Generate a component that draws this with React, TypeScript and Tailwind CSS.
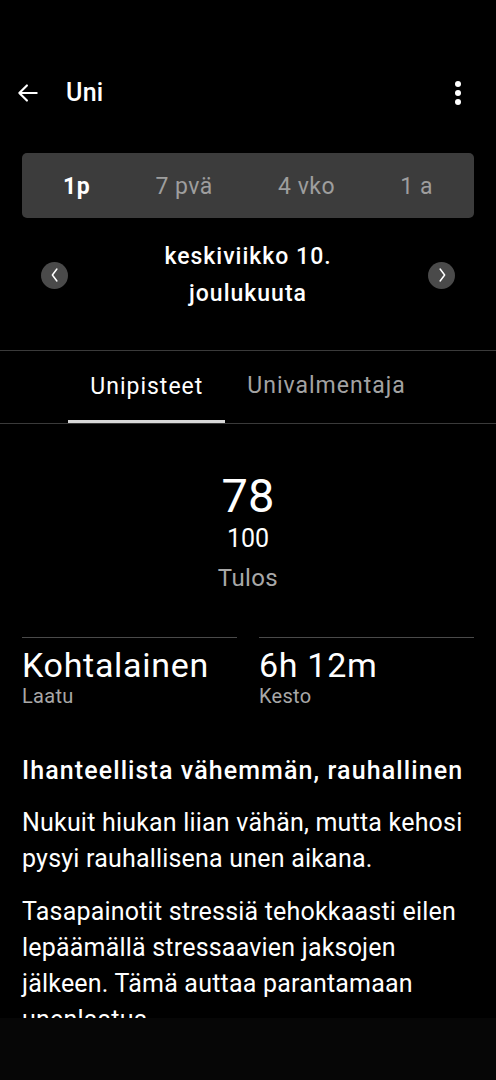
import React from "react"

const tabs = ["1p", "7 pvä", "4 vko", "1 a"]

const Chevron = ({ dir }: { dir: "left" | "right" }) => (
  <div className="w-[27px] h-[27px] rounded-full bg-[#4a4a4a] flex items-center justify-center">
    <svg width="18" height="18" viewBox="0 0 24 24" fill="none" stroke="#ffffff" strokeWidth={2} strokeLinecap="round" strokeLinejoin="round">
      {dir === "left" ? <path d="M14.5 4l-6 8 6 8" /> : <path d="M9.5 4l6 8-6 8" />}
    </svg>
  </div>
)

export default function App() {
  return (
    <div className="w-[496px] h-[1080px] bg-black text-[#f2f2f2] flex flex-col overflow-hidden" style={{ fontFamily: "Roboto, 'Noto Sans', sans-serif" }}>
      <div className="h-[1018px] overflow-hidden">
        {/* Header */}
        <div className="mt-[65px] h-[56px] flex items-center pl-[15px] pr-[35px]">
          <svg width="26" height="26" viewBox="0 0 24 24" fill="none" stroke="#ffffff" strokeWidth={2} strokeLinecap="round" strokeLinejoin="round">
            <path d="M20 12H4M11 5l-7 7 7 7" />
          </svg>
          <span className="ml-[25px] text-[25px] tracking-[0.3px] font-medium text-white">Uni</span>
          <div className="ml-auto flex flex-col items-center gap-[3px]">
            <span className="w-[6px] h-[6px] rounded-full bg-white" />
            <span className="w-[6px] h-[6px] rounded-full bg-white" />
            <span className="w-[6px] h-[6px] rounded-full bg-white" />
          </div>
        </div>

        {/* Segmented control */}
        <div className="mt-[32px] mx-[22px] h-[65px] rounded-[5px] bg-[#3c3c3c] flex items-center justify-between px-[41px] pt-[3px] text-[23px] tracking-[0.5px]">
          {tabs.map((t, i) => (
            <span key={t} className={i === 0 ? "font-bold text-white" : "text-[#9e9e9e]"}>{t}</span>
          ))}
        </div>

        {/* Date */}
        <div className="mt-[20px] flex items-center justify-between px-[41px]">
          <Chevron dir="left" />
          <div className="text-center text-[23px] tracking-[1px] font-medium leading-[37px] text-white">
            keskiviikko 10.<br />joulukuuta
          </div>
          <Chevron dir="right" />
        </div>

        {/* Tabs */}
        <div className="mt-[38px] border-t border-b border-[#3a3a3a] flex justify-center">
          <div className="px-[22px] h-[72px] flex items-center text-[23px] tracking-[1px] text-white border-b-[3px] border-[#d8d8d8] pt-[3px]">Unipisteet</div>
          <div className="px-[22px] h-[72px] flex items-center text-[23px] tracking-[1px] text-[#a3a3a3] pb-[1px]">Univalmentaja</div>
        </div>

        {/* Score */}
        <div className="mt-[45px] flex flex-col items-center">
          <div className="text-[47px] leading-[54px] text-white">78</div>
          <div className="text-[25px] leading-[30px] text-white mt-[1px]">100</div>
          <div className="mt-[9px] text-[24px] tracking-[0.4px] leading-[30px] text-[#a8a8a8]">Tulos</div>
        </div>

        {/* Stats */}
        <div className="mt-[44px] mx-[22px] grid grid-cols-2 gap-[22px]">
          <div className="border-t border-[#4a4a4a] pt-[7px]">
            <div className="text-[34px] tracking-[0.7px] leading-[40px] text-white">Kohtalainen</div>
            <div className="text-[20px] tracking-[0.3px] leading-[22px] text-[#a8a8a8]">Laatu</div>
          </div>
          <div className="border-t border-[#4a4a4a] pt-[7px]">
            <div className="text-[34px] tracking-[0.7px] leading-[40px] text-white">6h 12m</div>
            <div className="text-[20px] tracking-[0.3px] leading-[22px] text-[#a8a8a8]">Kesto</div>
          </div>
        </div>

        {/* Description */}
        <div className="mt-[48px] px-[22px]">
          <div className="text-[25px] tracking-[1.1px] font-medium leading-[32px] text-white whitespace-nowrap">Ihanteellista vähemmän, rauhallinen</div>
          <p className="mt-[18px] text-[25px] tracking-[0.2px] leading-[36px] text-white">
            Nukuit hiukan liian vähän, mutta kehosi pysyi rauhallisena unen aikana.
          </p>
          <p className="mt-[17px] text-[25px] tracking-[0.2px] leading-[36px] text-white">
            Tasapainotit stressiä tehokkaasti eilen lepäämällä stressaavien jaksojen jälkeen. Tämä auttaa parantamaan unenlaatua.
          </p>
        </div>
      </div>
      <div className="flex-1 bg-[#060606]" />
    </div>
  )
}
